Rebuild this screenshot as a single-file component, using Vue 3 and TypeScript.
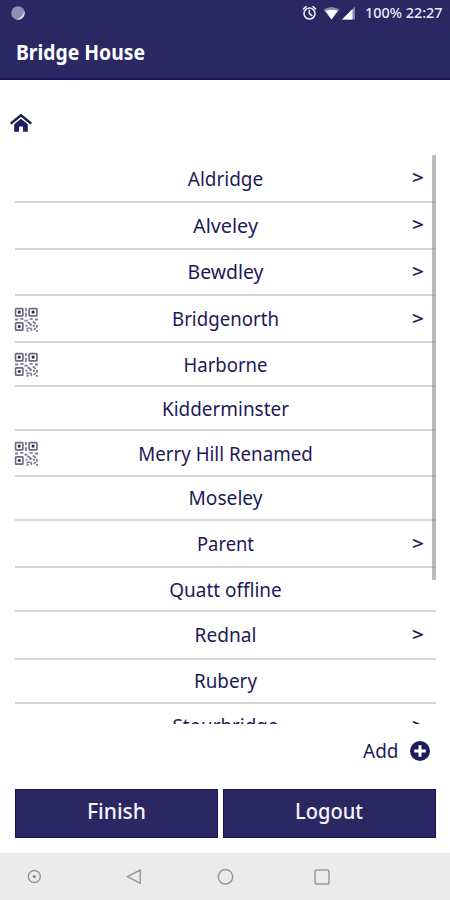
<script setup lang="ts">
interface Site {
  name: string
  width: number
  height: number
  baseline: number
  children?: boolean
  qr?: boolean
}

const sites: Site[] = [
  { name: 'Aldridge', width: 75.5, height: 48, baseline: 30.5, children: true },
  { name: 'Alveley', width: 65, height: 47, baseline: 29.5, children: true },
  { name: 'Bewdley', width: 76, height: 46, baseline: 29, children: true },
  { name: 'Bridgenorth', width: 107, height: 47, baseline: 30, children: true, qr: true },
  { name: 'Harborne', width: 84, height: 44, baseline: 28.5, qr: true },
  { name: 'Kidderminster', width: 127, height: 44, baseline: 29 },
  { name: 'Merry Hill Renamed', width: 174.5, height: 46, baseline: 30, qr: true },
  { name: 'Moseley', width: 74, height: 44, baseline: 28 },
  { name: 'Parent', width: 57, height: 47, baseline: 30, children: true },
  { name: 'Quatt offline', width: 112.5, height: 44, baseline: 28.5 },
  { name: 'Rednal', width: 62, height: 48, baseline: 30, children: true },
  { name: 'Rubery', width: 63, height: 44, baseline: 28 },
  { name: 'Stourbridge', width: 106, height: 46, baseline: 29.4, children: true },
]
</script>

<template>
  <div class="screen">
    <header class="top">
      <div class="status">
        <svg class="dot" width="16" height="16" viewBox="0 0 16 16">
          <circle cx="8" cy="8" r="6.800" fill="#918eb4" />
          <path d="M14.300 5.500A7 7 0 0 1 6.500 14.700Q12.800 12.500 14.300 5.500Z" fill="#dddcea" />
        </svg>
        <svg class="status-icons" width="54" height="16" viewBox="0 0 54 16">
          <g fill="none" stroke="#e8e7f2" stroke-width="1.600" stroke-linecap="round">
            <circle cx="8.500" cy="8.500" r="5.500" />
            <path d="M2.400 4 5 1.700M14.600 4 12 1.700M8.300 5.300V8.700L10.800 10.500" />
          </g>
          <path d="M22.500 4.600Q30.500-.6 38.500 4.600L30.500 14.500Z" fill="#8583ac" />
          <path d="M24.300 5.800Q30.500 3.500 36.700 5.800L30.500 14.500Z" fill="#fff" />
          <path d="M41 14.500 54 1.500V14.500Z" fill="#8583ac" />
          <path d="M41 14.500 51.500 4V14.500Z" fill="#fff" />
        </svg>
        <svg class="clock" width="80" height="24">
          <text x="0" y="13" textLength="77.500" lengthAdjust="spacingAndGlyphs">100% 22:27</text>
        </svg>
      </div>
      <svg class="title" width="150" height="36">
        <text x="0" y="20" textLength="129" lengthAdjust="spacingAndGlyphs">Bridge House</text>
      </svg>
    </header>

    <nav class="crumbs">
      <svg width="22" height="20" viewBox="0 0 22 20">
        <path d="M1.500 10 11 2.200 20.500 10" fill="none" stroke="#242044" stroke-width="2.400" stroke-linecap="round" stroke-linejoin="round" />
        <path d="M4.200 11.200 11 5.700 17.800 11.200V18.700H13V13.500H9V18.700H4.200Z" fill="#211d62" />
      </svg>
    </nav>

    <main class="list">
      <div v-for="site in sites" :key="site.name" class="row" :style="{ height: site.height + 'px' }">
        <svg v-if="site.qr" class="qr" width="25" height="25" viewBox="0 0 24 24">
          <g fill="none" stroke="#6c6a86" stroke-width="1.600">
            <rect x="1.500" y="1.500" width="7" height="7" rx=".7" />
            <rect x="14.500" y="1.500" width="7.500" height="7" rx=".7" />
            <rect x="1.500" y="15.200" width="7" height="7" rx=".7" />
          </g>
          <path d="M3.700 3.700h2.600v2.600H3.700zM17 3.700h2.600v2.600H17zM3.700 17.400h2.600V20H3.700z" fill="#25214f" />
          <path d="M11.500 1v3M11.500 5.500v4M1 12h3M6 11.500h3M10 13h3M15 11.500h3M20 12h3M13 14.500l3 2M18 14l3 2M12 17v2M15 18l2-1.500M18 18h2M22 17v3M12 21l3-1M16 20l1 3M19 22l2-2M12 23h2M21 23h2" fill="none" stroke="#7f7d96" stroke-width="1.700" />
        </svg>
        <svg class="label" width="420" :height="site.height">
          <text x="210.500" :y="site.baseline" text-anchor="middle" :textLength="site.width" lengthAdjust="spacingAndGlyphs">{{ site.name }}</text>
          <text v-if="site.children" class="more" x="397" :y="site.baseline - 1.500" textLength="12" lengthAdjust="spacingAndGlyphs">&gt;</text>
        </svg>
      </div>
      <div class="scrollbar"></div>
    </main>

    <div class="add">
      <svg width="38" height="28">
        <text x="0" y="20.500" textLength="35.500" lengthAdjust="spacingAndGlyphs">Add</text>
      </svg>
      <svg width="20" height="20" viewBox="0 0 20 20">
        <circle cx="10" cy="10" r="10" fill="#1d195c" />
        <path d="M10 4.200V15.800M4.200 10H15.800" stroke="#fff" stroke-width="3" />
      </svg>
    </div>

    <div class="actions">
      <button type="button">
        <svg width="60" height="30"><text x="0" y="21.500" textLength="59" lengthAdjust="spacingAndGlyphs">Finish</text></svg>
      </button>
      <button type="button">
        <svg width="69" height="30"><text x="0" y="21.500" textLength="68" lengthAdjust="spacingAndGlyphs">Logout</text></svg>
      </button>
    </div>

    <footer class="system">
      <svg width="450" height="47" viewBox="0 0 450 47" fill="none" stroke="#999" stroke-width="1.500">
        <circle cx="34.300" cy="23.500" r="6" />
        <circle cx="34.300" cy="23.500" r="1.600" fill="#888" stroke="none" />
        <path d="M140.300 17V30.300L127.500 23.700Z" stroke-linejoin="round" />
        <circle cx="225.500" cy="23.800" r="7.200" />
        <rect x="315" y="17" width="14" height="14" rx="1.800" />
      </svg>
    </footer>
  </div>
</template>

<style>
body {
  margin: 0;
  background: #fff;
}
</style>

<style scoped>
.screen {
  width: 450px;
  height: 900px;
  display: flex;
  flex-direction: column;
  overflow: hidden;
  background: #fff;
  color: #1e1a58;
  font-family: "Noto Sans", "Open Sans", sans-serif;
}
svg {
  display: block;
  flex: none;
  overflow: visible;
}
text {
  fill: #1e1a58;
  font-size: 19.5px;
}
.top {
  height: 80px;
  box-sizing: border-box;
  flex: none;
  background: #2a2762;
  border-bottom: 2px solid #17125a;
}
.status {
  display: flex;
  height: 38px;
  align-items: flex-start;
  padding: 5px 5px 0 10px;
  box-sizing: border-box;
}
.status-icons {
  margin-left: auto;
}
.clock {
  margin-left: 10px;
}
.clock text {
  fill: #ebeaf4;
  font-size: 14px;
  font-weight: 500;
}
.title {
  margin-left: 16px;
  margin-top: 2px;
}
.title text {
  fill: #fff;
  font-size: 20.5px;
  font-weight: 700;
}
.crumbs {
  height: 75px;
  box-sizing: border-box;
  padding: 33px 0 0 10px;
  flex: none;
}
.list {
  position: relative;
  height: 569px;
  flex: none;
  overflow: hidden;
  padding: 0 14px 0 15px;
}
.row {
  position: relative;
  display: flex;
  box-sizing: border-box;
  border-bottom: 2px solid #d6d6d8;
}
.qr {
  position: absolute;
  left: -1px;
  top: 50%;
  transform: translateY(-48%);
}
.label .more {
  font-size: 18px;
  font-weight: 600;
}
.scrollbar {
  position: absolute;
  right: 14px;
  top: 0;
  width: 4px;
  height: 425px;
  background: rgba(120, 120, 120, 0.5);
}
.add {
  display: flex;
  align-items: center;
  justify-content: flex-end;
  gap: 9px;
  height: 65px;
  flex: none;
  padding: 0 20px 11px 0;
  box-sizing: border-box;
}
.actions {
  display: grid;
  grid-template-columns: 203px 213px;
  gap: 5px;
  height: 49px;
  flex: none;
  padding-left: 15px;
}
.actions button {
  display: flex;
  align-items: center;
  justify-content: center;
  padding: 0 0 3px;
  margin: 0;
  border: 1.500px solid #17125a;
  background: #2a2762;
  font-family: inherit;
}
.actions text {
  fill: #f5f5fb;
  font-size: 21px;
  font-weight: 500;
}
.system {
  margin-top: 15px;
  height: 47px;
  flex: none;
  background: #ebebeb;
}
</style>
